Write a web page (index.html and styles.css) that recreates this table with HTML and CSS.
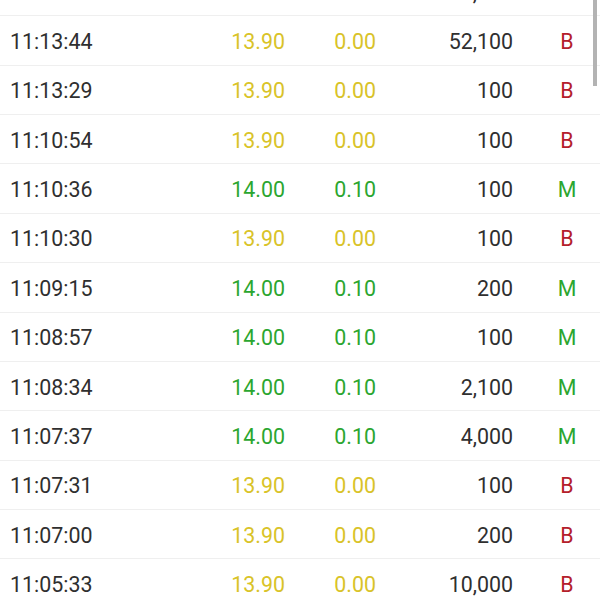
FILE: index.html
```html
<!DOCTYPE html>
<html lang="vi">
<head>
  <meta charset="UTF-8">
  <title>Khớp lệnh</title>
  <link rel="stylesheet" href="styles.css">
</head>
<body>

  <div class="scroll-thumb"></div>

  <div class="trades">
    <div class="trade-row"><span class="time">11:14:07</span><span class="num ref">13.90</span><span class="num ref">0.00</span><span class="num vol">157,000</span><span class="side sell">B</span></div>
    <div class="trade-row"><span class="time">11:13:44</span><span class="num ref">13.90</span><span class="num ref">0.00</span><span class="num vol">52,100</span><span class="side sell">B</span></div>
    <div class="trade-row"><span class="time">11:13:29</span><span class="num ref">13.90</span><span class="num ref">0.00</span><span class="num vol">100</span><span class="side sell">B</span></div>
    <div class="trade-row"><span class="time">11:10:54</span><span class="num ref">13.90</span><span class="num ref">0.00</span><span class="num vol">100</span><span class="side sell">B</span></div>
    <div class="trade-row"><span class="time">11:10:36</span><span class="num up">14.00</span><span class="num up">0.10</span><span class="num vol">100</span><span class="side buy">M</span></div>
    <div class="trade-row"><span class="time">11:10:30</span><span class="num ref">13.90</span><span class="num ref">0.00</span><span class="num vol">100</span><span class="side sell">B</span></div>
    <div class="trade-row"><span class="time">11:09:15</span><span class="num up">14.00</span><span class="num up">0.10</span><span class="num vol">200</span><span class="side buy">M</span></div>
    <div class="trade-row"><span class="time">11:08:57</span><span class="num up">14.00</span><span class="num up">0.10</span><span class="num vol">100</span><span class="side buy">M</span></div>
    <div class="trade-row"><span class="time">11:08:34</span><span class="num up">14.00</span><span class="num up">0.10</span><span class="num vol">2,100</span><span class="side buy">M</span></div>
    <div class="trade-row"><span class="time">11:07:37</span><span class="num up">14.00</span><span class="num up">0.10</span><span class="num vol">4,000</span><span class="side buy">M</span></div>
    <div class="trade-row"><span class="time">11:07:31</span><span class="num ref">13.90</span><span class="num ref">0.00</span><span class="num vol">100</span><span class="side sell">B</span></div>
    <div class="trade-row"><span class="time">11:07:00</span><span class="num ref">13.90</span><span class="num ref">0.00</span><span class="num vol">200</span><span class="side sell">B</span></div>
    <div class="trade-row"><span class="time">11:05:33</span><span class="num ref">13.90</span><span class="num ref">0.00</span><span class="num vol">10,000</span><span class="side sell">B</span></div>
  </div>

</body>
</html>
```

FILE: styles.css
```css
    body {
      margin: 0;
      background: #fff;
      font-family: Roboto, 'Noto Sans', sans-serif;
      color: #2f2f2f;
      height: 100vh;
      overflow: hidden;
      position: relative;
    }

    .trades {
      margin-top: -33px;
    }

    .trade-row {
      display: grid;
      grid-template-columns: 190px 85px 91px 137px 1fr;
      align-items: center;
      height: 46.36px;
      padding-top: 2px;
      padding-left: 10px;
      border-bottom: 1px solid #efefef;
      font-size: 21.4px;
    }

    .num {
      text-align: right;
    }

    .side {
      text-align: center;
      padding-left: 21px;
    }

    .ref { color: #d9c328; }
    .up { color: #2ba62f; }
    .sell { color: #b4202b; }
    .buy { color: #2ba62f; }

    .scroll-thumb {
      position: absolute;
      top: 0;
      right: 3px;
      width: 4px;
      height: 86px;
      background: #b3b3b3;
      z-index: 2;
    }
```
